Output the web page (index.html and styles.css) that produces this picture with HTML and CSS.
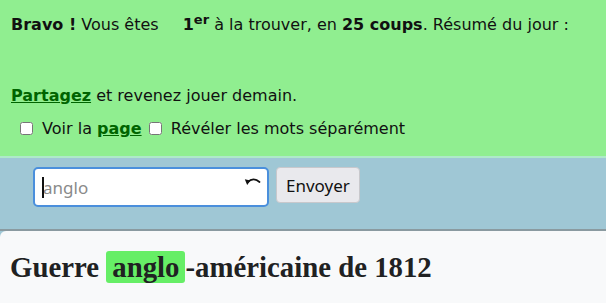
FILE: index.html
```html
<!DOCTYPE html>
<html lang="fr">
<head>
  <meta charset="UTF-8">
  <title>Pédantix</title>
  <link rel="stylesheet" href="styles.css">
</head>
<body>
  <div class="success">
    <p class="win-line"><b>Bravo !</b> Vous êtes <span class="rank"><b>1<sup>er</sup></b></span> à la trouver, en <b>25 coups</b>. Résumé du jour :</p>
    <div class="summary"></div>
    <p class="share-line"><a href="#">Partagez</a> et revenez jouer demain.</p>
    <div class="toggles">
      <label><input type="checkbox"> Voir la <a href="#">page</a></label>
      <label><input type="checkbox"> Révéler les mots séparément</label>
    </div>
  </div>

  <div class="guess-bar">
    <div class="guess-field">
      <input type="text" placeholder="anglo">
      <span class="caret"></span>
      <svg class="undo" width="17" height="10" viewBox="0 0 17 10">
        <path d="M3.5 6.5 Q9 0.5 15.5 6" fill="none" stroke="#111" stroke-width="1.7" stroke-linecap="round"/>
        <path d="M0.8 3.2 L3.2 9 L6.4 4.4 Z" fill="#111"/>
      </svg>
    </div>
    <button class="send-button">Envoyer</button>
  </div>

  <div class="article">
    <h1>Guerre <span class="hit">anglo</span>-américaine de 1812</h1>
  </div>
</body>
</html>
```

FILE: styles.css
```css
body {
  margin: 0;
  min-height: 100vh;
  display: flex;
  flex-direction: column;
  font-family: "DejaVu Sans", sans-serif;
  font-size: 16px;
  color: #111;
  background: #9fc7d5;
}

.success {
  background-color: #90ee90;
  padding: 15px 11px 18px;
  border-bottom: 2px solid #aee9c9;
}

.success p {
  margin: 0;
}

.win-line sup {
  font-size: 13px;
  line-height: 0;
}

.rank {
  margin-left: 19px;
}

.summary {
  height: 52px;
}

.success a {
  color: #006400;
  font-weight: bold;
}

.toggles {
  margin-top: 14px;
  padding-left: 9px;
}

.toggles label {
  margin-right: 2px;
}

.toggles input {
  width: 13px;
  height: 13px;
  margin: 0 4px 0 0;
  vertical-align: -1px;
}

.guess-bar {
  display: flex;
  align-items: flex-start;
  gap: 7px;
  padding: 9px 33px 22px;
  border-bottom: 2px solid #8a9aa0;
}

.guess-field {
  position: relative;
}

.guess-field input {
  display: block;
  width: 236px;
  height: 40px;
  box-sizing: border-box;
  border: 2px solid #4a8fdc;
  border-radius: 5px;
  padding: 0 8px;
  font-family: "Noto Sans", sans-serif;
  font-size: 17px;
  outline: none;
}

.guess-field input::placeholder {
  color: #8a8a8a;
}

.caret {
  position: absolute;
  left: 9px;
  top: 10px;
  width: 2px;
  height: 21px;
  background: #111;
}

.undo {
  position: absolute;
  right: 8px;
  top: 9px;
}

.send-button {
  height: 36px;
  padding: 0 9px;
  font-family: "Noto Sans", sans-serif;
  font-size: 17px;
  color: #111;
  background: #e9e9ed;
  border: 1px solid #c8c8cc;
  border-radius: 4px;
}

.article {
  flex: 1;
  background: #f8f9fa;
  border-top-left-radius: 6px;
  padding: 20px 10px 0;
}

.article h1 {
  margin: 0;
  font-family: "Liberation Serif", serif;
  font-size: 28.8px;
  color: #202122;
}

.hit {
  background: #66ee66;
  border-radius: 3px;
  padding: 0 6px;
}
```
